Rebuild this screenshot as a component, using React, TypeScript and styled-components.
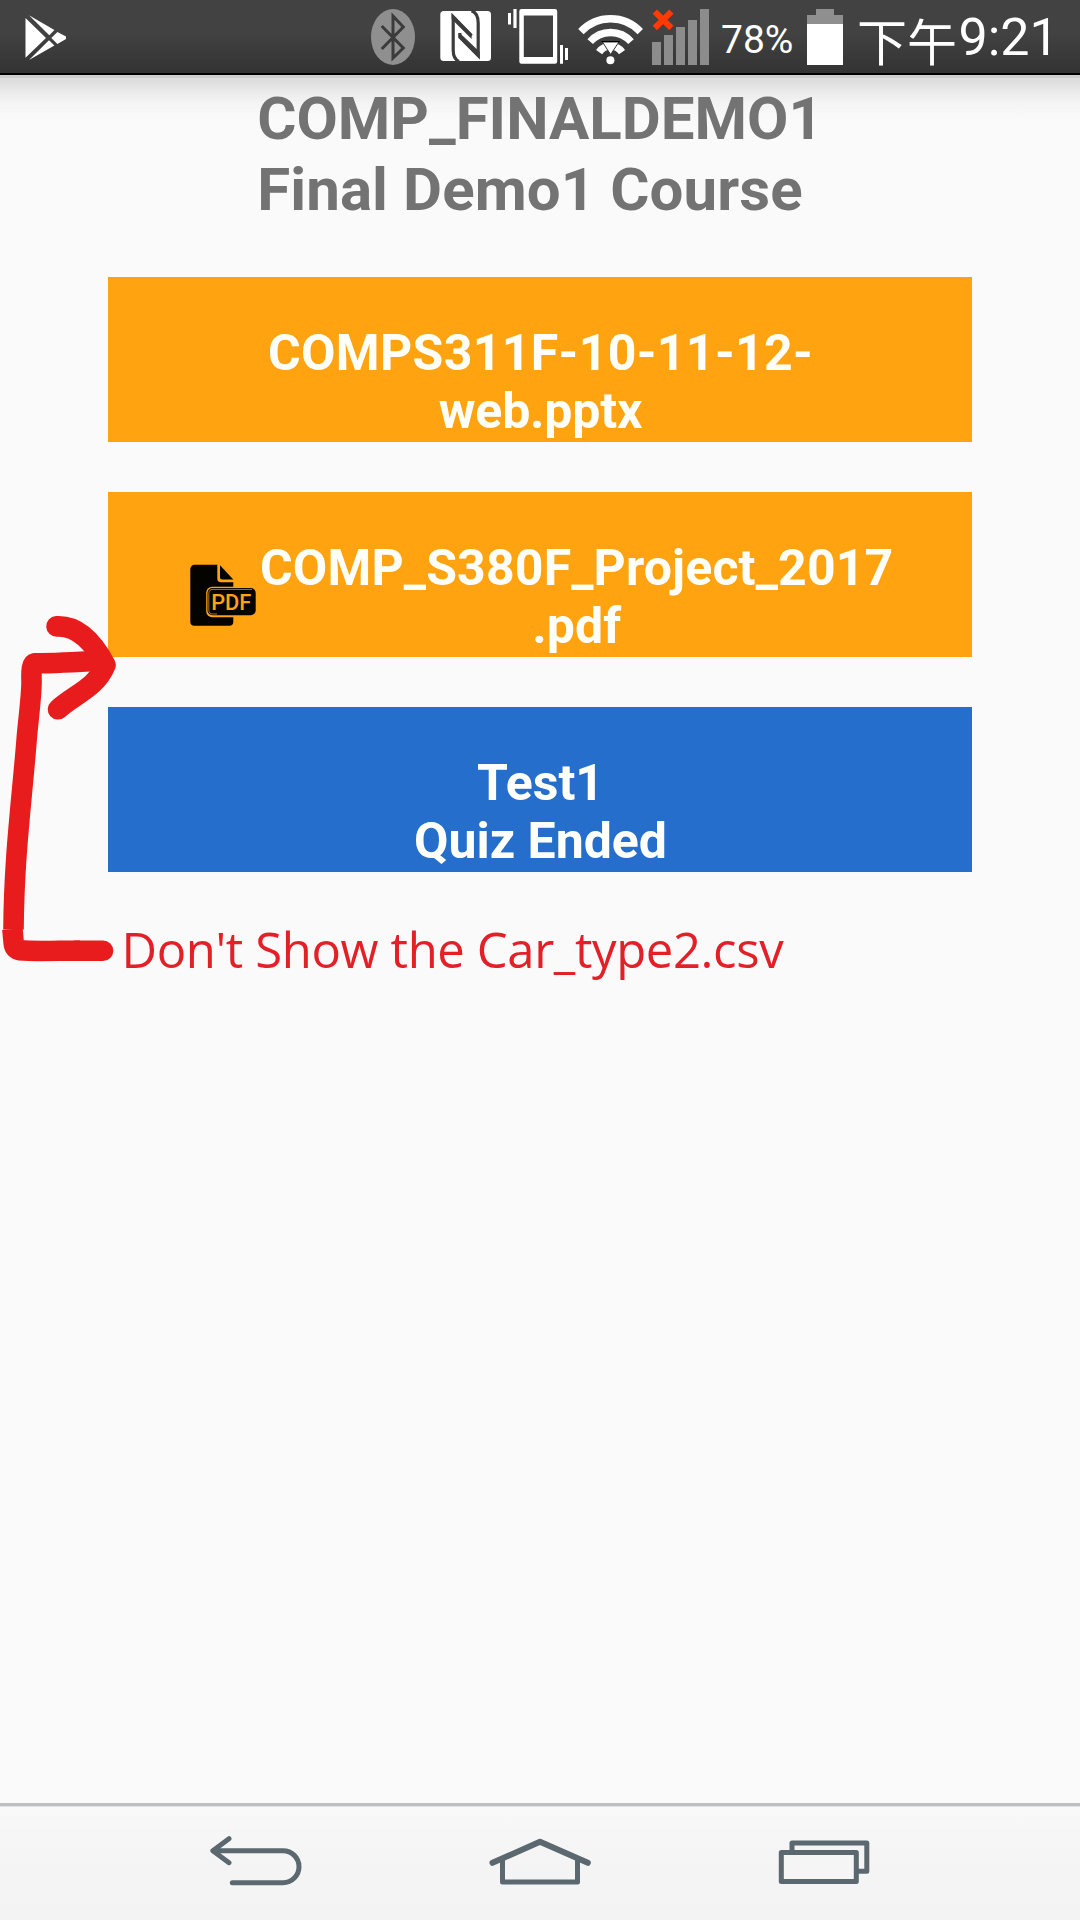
import React from 'react';
import styled, { createGlobalStyle } from 'styled-components';

const ORANGE = '#ffa311';
const BLUE = '#256ecb';
const INK = '#5b6870';
const RED = '#e81c1d';

const GlobalStyle = createGlobalStyle`
  body {
    margin: 0;
    background: #fafafa;
    font-family: Roboto, 'Liberation Sans', sans-serif;
  }
`;

const Screen = styled.div`
  position: relative;
  display: flex;
  flex-direction: column;
  width: 1080px;
  height: 1920px;
  overflow: hidden;
  background: #fafafa;
`;

const StatusBar = styled.header`
  display: flex;
  justify-content: space-between;
  box-sizing: border-box;
  height: 75px;
  padding: 0 20px 0 22px;
  border-bottom: 2px solid #000;
  background: linear-gradient(#424242 0, #424242 45%, #333 100%);
  color: #fff;
`;

const StatusGroup = styled.div`
  display: flex;
  align-items: flex-start;
`;

const StatusIcon = styled.svg<{ $after?: number }>`
  display: block;
  flex: none;
  height: 73px;
  margin-right: ${(p) => p.$after ?? 0}px;
`;

const BatteryLevel = styled.span`
  width: 86px;
  padding-top: 17px;
  font-size: 39px;
  line-height: 46px;
`;

const Clock = styled.time`
  display: flex;
  width: 203px;
  font-size: 52px;
  line-height: 60px;
  padding-top: 8px;
`;

const Meridiem = styled.span`
  width: 101.5px;
  padding-top: 1px;
  font-family: 'Noto Sans CJK TC', sans-serif;
  font-size: 50px;
`;

const Content = styled.main`
  display: flex;
  flex: 1;
  flex-direction: column;
  align-items: center;
  background: linear-gradient(
    #cfcfcf 0,
    #cfcfcf 3px,
    #dedede 3px,
    #dedede 7px,
    #ebebeb 17px,
    #f4f4f4 28px,
    #fafafa 44px
  );
`;

const CourseTitle = styled.h1`
  margin: 9px 0 0;
  color: #737373;
  font-size: 60px;
  font-weight: 700;
  line-height: 70.5px;
`;

const TitleLine = styled.span<{ $track?: number }>`
  display: block;
  letter-spacing: ${(p) => p.$track ?? 0}px;
`;

const ItemList = styled.div`
  display: flex;
  flex-direction: column;
  gap: 50px;
  width: 864px;
  margin-top: 52px;
`;

const ItemButton = styled.button<{ $color: string; $withIcon?: boolean }>`
  display: flex;
  justify-content: ${(p) => (p.$withIcon ? 'flex-start' : 'center')};
  align-items: flex-start;
  box-sizing: border-box;
  height: 165px;
  padding: 47px 0 0 ${(p) => (p.$withIcon ? 82 : 1)}px;
  border: 0;
  background: ${(p) => p.$color};
  color: #fffffa;
  font-family: inherit;
  font-size: 50px;
  font-weight: 700;
  line-height: 58px;
`;

const Label = styled.span`
  display: flex;
  flex-direction: column;
  align-items: center;
`;

const LabelLine = styled.span<{ $track?: number }>`
  letter-spacing: ${(p) => p.$track ?? 0}px;
  white-space: nowrap;
`;

const FileIcon = styled.svg`
  display: block;
  flex: none;
  width: 70px;
  height: 62px;
  margin-top: 25px;
`;

const Note = styled.p`
  align-self: flex-start;
  margin: 44px 0 0 121.5px;
  color: #e32028;
  font-family: 'Open Sans', 'Noto Sans', sans-serif;
  font-size: 49px;
  letter-spacing: -0.37px;
  line-height: 66px;
  white-space: nowrap;
`;

const ArrowOverlay = styled.svg`
  position: absolute;
  top: 600px;
  left: 0;
  width: 130px;
  height: 380px;
  pointer-events: none;
`;

const NavBar = styled.nav`
  display: flex;
  justify-content: space-between;
  box-sizing: border-box;
  height: 117px;
  padding: 0 208px;
  border-top: 3px solid #bdc0c2;
  background: linear-gradient(#e2e2e2 0, #e2e2e2 1px, #f9f9f9 1px, #f5f5f5 40px, #f3f3f3 100%);
`;

const NavIcon = styled.svg`
  display: block;
  height: 114px;
  fill: none;
  stroke: ${INK};
  stroke-width: 5;
  stroke-linecap: round;
  stroke-linejoin: round;
`;

const signalTops = [42, 35, 27, 20, 9];

function StatusIcons() {
  return (
    <>
      <StatusIcon width={44} viewBox="371 0 44 73" $after={25}>
        <ellipse cx="393" cy="37" rx="22" ry="28" fill="#8f8f8f" />
        <path d="M381.7 26 403.3 48 393 58V16L403.3 27 381.7 49" fill="none" stroke="#3b3b3b" strokeWidth="3" />
      </StatusIcon>
      <StatusIcon width={51} viewBox="440 0 51 73" $after={17}>
        <rect x="440.3" y="11" width="50.7" height="50" rx="3.5" fill="#fff" />
        <g fill="none" stroke="#3c3c3c" strokeWidth="3.2">
          <path d="M459 61.5Q453.2 59 453.2 50V17L471.6 35.8" />
          <path d="M471.5 10.7Q478.2 13 478.2 23V55.5L459.8 37V33" />
        </g>
        <path d="M451.6 13V19L471.6 39V33.5Z M479.8 59V52L459.8 33V38.5Z" fill="#3c3c3c" />
      </StatusIcon>
      <StatusIcon width={62} viewBox="508 0 62 73" $after={8}>
        <path
          fill="#fff"
          fillRule="evenodd"
          d="M521.5 9H555a2.3 2.3 0 0 1 2.2 2.3V61.4a2.3 2.3 0 0 1-2.2 2.3H521.5a2.3 2.3 0 0 1-2.2-2.3V11.3A2.3 2.3 0 0 1 521.5 9ZM523.8 15.5V57H553V15.5Z"
        />
        <path fill="#fff" d="M508 13h3v11.5h-3ZM513.4 9h3.2v19h-3.2ZM560 45h3v18.7h-3ZM565 48h3v12h-3Z" />
      </StatusIcon>
      <StatusIcon width={66} viewBox="578 0 66 73" $after={8}>
        <g fill="none" stroke="#fff" strokeWidth="7.4">
          <path d="M580.9 31.6A40.8 40.8 0 0 1 640.3 31.6" />
          <path d="M590.2 41.6A27.3 27.3 0 0 1 631 41.6" />
          <path d="M599.1 52.1A14 14 0 0 1 622 52.1" />
        </g>
        <path d="M602.3 41.8H619L610.6 54.6Z" fill="#fff" stroke="#333" strokeWidth="1" />
        <path d="M601.5 41.6H619.8" stroke="#000" strokeWidth="1.2" />
        <circle cx="610.4" cy="60.2" r="4" fill="#fff" />
      </StatusIcon>
      <StatusIcon width={57} viewBox="652 0 57 73" $after={12}>
        {signalTops.map((top, i) => (
          <rect key={top} x={652 + i * 12} y={top} width="9" height={65 - top} fill="#8c8c8c" />
        ))}
        <path d="M654.8 11.6 671.4 28M671.4 11.6 654.8 28" stroke="#ff3a05" strokeWidth="6" />
      </StatusIcon>
    </>
  );
}

function PdfIcon() {
  return (
    <FileIcon viewBox="0 0 70 62">
      <path
        d="M5 .7H27.3V14.5Q27.3 18.3 31 18.3H43.3V57.7a4 4 0 0 1-4 4H4.3a4 4 0 0 1-4-4V5A4.3 4.3 0 0 1 4.6.7Z"
        fill="#050300"
      />
      <path d="M30 1.2 43.3 15.4H32Q30 15.4 30 13.4Z" fill="#050300" />
      <rect x="16.2" y="22.8" width="54" height="30.4" rx="6" fill={ORANGE} />
      <rect x="17.5" y="24" width="48.2" height="27.2" rx="5" fill="#050300" />
      <path d="M62 25.4H23Q18.8 25.4 18.8 29.5V46Q18.8 50 23 50H27" fill="none" stroke={ORANGE} strokeWidth="0.7" />
      <text x="21.2" y="46" fill={ORANGE} fontFamily="Roboto, sans-serif" fontSize="21.8" fontWeight="500">
        PDF
      </text>
    </FileIcon>
  );
}

export default function App() {
  return (
    <>
      <GlobalStyle />
      <Screen>
        <StatusBar>
          <StatusGroup>
            <StatusIcon width={48} viewBox="22 0 48 73">
              <path
                fill="#fff"
                d="M25.5 18V57.7L46 38ZM29 15.2 54.4 30 49.3 35.3ZM29 60 54.4 45.6 49 40.3ZM57.4 32 66 36.6V39L57.4 44 51.3 38Z"
              />
            </StatusIcon>
          </StatusGroup>
          <StatusGroup>
            <StatusIcons />
            <BatteryLevel>78%</BatteryLevel>
            <StatusIcon width={36} viewBox="807 0 36 73" $after={14}>
              <path fill="#8f8f8f" d="M816 9h18v6h9v9h-36v-9h9Z" />
              <path fill="#fff" d="M807 24h36v41h-36Z" />
            </StatusIcon>
            <Clock>
              <Meridiem>下午</Meridiem>9:21
            </Clock>
          </StatusGroup>
        </StatusBar>
        <Content>
          <CourseTitle>
            <TitleLine>COMP_FINALDEMO1</TitleLine>
            <TitleLine $track={0.1}>Final Demo1 Course</TitleLine>
          </CourseTitle>
          <ItemList>
            <ItemButton $color={ORANGE}>
              <Label>
                <LabelLine $track={0.36}>COMPS311F-10-11-12-</LabelLine>
                <LabelLine $track={-0.2}>web.pptx</LabelLine>
              </Label>
            </ItemButton>
            <ItemButton $color={ORANGE} $withIcon>
              <PdfIcon />
              <Label>
                <LabelLine $track={0.15}>COMP_S380F_Project_2017</LabelLine>
                <LabelLine>.pdf</LabelLine>
              </Label>
            </ItemButton>
            <ItemButton $color={BLUE}>
              <Label>
                <LabelLine>Test1</LabelLine>
                <LabelLine>Quiz Ended</LabelLine>
              </Label>
            </ItemButton>
          </ItemList>
          <Note>Don't Show the Car_type2.csv</Note>
        </Content>
        <NavBar>
          <NavIcon width={96} viewBox="208 1806 96 114">
            <path d="M229 1838.7 212.8 1850.7 229 1862.7M213 1850.7H283a16 16 0 0 1 0 32H232.3" />
          </NavIcon>
          <NavIcon width={104} viewBox="488 1806 104 114">
            <path d="M502.5 1860V1882H577.5V1860" />
            <path d="M492.5 1862.8 540 1841.7 587.8 1862.8" strokeWidth="6" />
          </NavIcon>
          <NavIcon width={96} viewBox="776 1806 96 114">
            <rect x="792" y="1843" width="74.8" height="28.3" />
            <rect x="781.3" y="1852.6" width="75" height="28.9" fill="#f5f5f5" />
          </NavIcon>
        </NavBar>
        <ArrowOverlay viewBox="0 600 130 380">
          <g fill="none" stroke={RED} strokeWidth="20.6" strokeLinejoin="round">
            <path d="M12.4 929L13.8 944Q14.5 949.5 20 950.3Q30 951.3 60 950.8H80" />
            <path d="M75 950.8H103" strokeLinecap="round" />
            <path d="M13.5 929.5C14 855 22 800 27 735C30 705 32 690 31.5 680Q31 664 34.5 663.3Q60 663.3 100 660.5" />
            <path d="M56.5 626.4C80 625 96 647 105.5 665C96 688 75 694 58 709.3" strokeLinecap="round" />
          </g>
        </ArrowOverlay>
      </Screen>
    </>
  );
}
